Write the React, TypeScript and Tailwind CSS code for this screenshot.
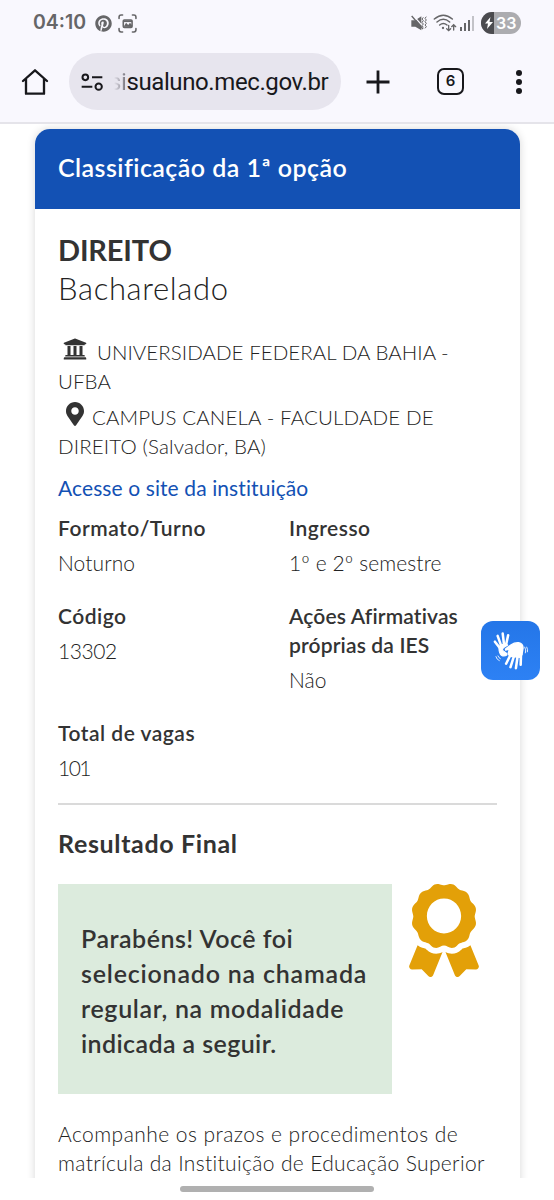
import type { ReactNode } from 'react'
import { FaAward, FaMapMarkerAlt, FaPinterest, FaUniversity } from 'react-icons/fa'

interface FieldProps {
  label: ReactNode
  value: string
  labelClass?: string
  valueClass?: string
}

function Field({ label, value, labelClass = 'tracking-[0.5px]', valueClass = 'tracking-[0.1px]' }: FieldProps) {
  return (
    <div className="leading-[29px] whitespace-nowrap">
      <p className={`text-[21px] font-semibold text-[#333] ${labelClass}`}>{label}</p>
      <p className={`mt-1.5 text-[21px] font-light text-[#222] ${valueClass}`}>{value}</p>
    </div>
  )
}

function StatusBar() {
  return (
    <div className="flex h-[46px] items-center justify-between pl-[33px] pr-[33px] text-[#666668]">
      <div className="flex items-center">
        <span className="w-[62px] font-['Inter',sans-serif] text-[19.5px] font-semibold whitespace-nowrap">04:10</span>
        <FaPinterest className="h-[17px] w-[17px]" />
        <svg className="ml-[6px] h-[19px] w-[19px]" viewBox="0 0 54 54" fill="none" stroke="currentColor" strokeWidth="4.5" strokeLinecap="round">
          <path d="M3 13V9q0-6 6-6h4M41 3h4q6 0 6 6v4M51 41v4q0 6-6 6h-4M13 51H9q-6 0-6-6v-4" />
          <rect x="15" y="17" width="25" height="21" rx="3" />
          <path d="M16 36l7-11 6 6 5-6 6 7v5z" fill="currentColor" stroke="none" />
          <path d="M15 18h25v5H15z" fill="currentColor" stroke="none" />
        </svg>
      </div>
      <div className="flex items-center">
        <svg className="h-[17px] w-[17px]" viewBox="0 0 51 51" fill="currentColor">
          <path d="M1 16h12L31 4v42L13 35H1z" />
          <path d="M6 1l38 42" stroke="#f9f8fe" strokeWidth="4" />
          <path d="M2 3l34 39" stroke="currentColor" strokeWidth="4" />
          <path d="M37 7l-4 5 4 5-4 5 4 5-4 5 4 5M46 5l-4 5 4 5-4 5 4 5-4 5 4 5-4 5" fill="none" stroke="currentColor" strokeWidth="3" />
        </svg>
        <svg className="ml-[5px] h-[18px] w-[24px]" viewBox="0 0 72 54" fill="none" stroke="currentColor" strokeWidth="4.5" strokeLinecap="round">
          <path d="M4 15Q31-8 58 15M12 24Q31 8 50 24M20 33Q31 24 42 33" />
          <circle cx="30" cy="42" r="3.500" fill="currentColor" stroke="none" />
          <path d="M47 34v15M41 44l6 6 6-6M62 48V33M56 38l6-6 6 6" strokeWidth="4" />
        </svg>
        <div className="ml-[3px] flex h-[15px] items-end gap-[2.3px]">
          <i className="h-[4px] w-[1.7px] bg-current" />
          <i className="h-[8px] w-[1.7px] bg-current" />
          <i className="h-[11px] w-[1.7px] bg-current" />
          <i className="h-[15px] w-[1.7px] bg-[#c3c3c8]" />
        </div>
        <div className="ml-[7px] flex h-[22px] w-[40px] items-center overflow-hidden rounded-full bg-[#acacb0] text-white">
          <span className="flex h-full w-[13px] items-center justify-end bg-[#4b4b4f]">
            <svg className="h-[12px] w-[10px]" viewBox="0 0 20 24" fill="currentColor">
              <path d="M13 0L2 13h6L6 24l12-14h-7z" />
            </svg>
          </span>
          <span className="pl-[2px] font-['Inter',sans-serif] text-[16px] font-semibold">33</span>
        </div>
      </div>
    </div>
  )
}

function BrowserBar() {
  return (
    <div className="flex h-[78px] border-b-2 border-[#e5e4ea] pt-[7px] text-[#18181c]">
      <svg className="mt-[15px] ml-[21px] h-[28px] w-[28px]" viewBox="0 0 84 84" fill="none" stroke="currentColor" strokeWidth="7" strokeLinejoin="round" strokeLinecap="round">
        <path d="M6 39L42 7l36 32M15 33v44h54V33" />
      </svg>
      <div className="ml-5 flex h-[57px] w-[272px] items-center rounded-full bg-[#e7e5ee] pl-[12px]">
        <svg className="h-[20px] w-[23px]" viewBox="0 0 69 60" fill="none" stroke="currentColor" strokeWidth="6">
          <circle cx="13" cy="16" r="8.500" />
          <path d="M33 16h31M2 44h32" />
          <circle cx="53" cy="44" r="9.500" />
        </svg>
        <span className="ml-[5px] font-['Roboto',sans-serif] text-[24px] tracking-[-0.4px] whitespace-nowrap">
          <span className="bg-gradient-to-r from-[#e7e5ee] from-30% to-[#77757e] bg-clip-text text-transparent">si</span>sualuno.mec.gov.br
        </span>
      </div>
      <svg className="mt-[17px] ml-[25px] h-[24px] w-[24px]" viewBox="0 0 24 24" stroke="currentColor" strokeWidth="2.800">
        <path d="M12 .5v23M.5 12h23" />
      </svg>
      <div className="mt-[15px] ml-[47px] flex h-[27px] w-[27px] items-center justify-center rounded-[7px] border-[2.500px] border-current font-['Inter',sans-serif] text-[15px] font-semibold">
        6
      </div>
      <div className="mt-[17px] ml-[52px] flex flex-col gap-[3px]">
        <i className="h-[6px] w-[6px] rounded-full bg-current" />
        <i className="h-[6px] w-[6px] rounded-full bg-current" />
        <i className="h-[6px] w-[6px] rounded-full bg-current" />
      </div>
    </div>
  )
}

function SignLanguageButton() {
  return (
    <button className="absolute top-[621px] left-[481px] h-[59px] w-[59px] rounded-[12px] bg-gradient-to-b from-[#2476e8] to-[#2d81f4]">
      <svg className="h-full w-full" viewBox="34 34 174 174" fill="none" stroke="#fff" strokeWidth="7.500" strokeLinecap="round" strokeLinejoin="round">
        <path d="M90 114L75 95M94 108L83 78M102 104L98 71M108 104L114 76" />
        <path d="M87 110q8-10 21-8l5 3-13 8-3 7 12 9 2 5q-9 6-17 1-8-7-7-25z" fill="#fff" strokeWidth="3" />
        <path d="M106 117l17-13q10-7 22-6 13 2 13 16l-3 19-6 8-30-3-5-8 4-13-11 3z" fill="#fff" strokeWidth="4" />
        <path d="M121 134l-13 26M131 138l-10 32M142 138l-5 35M152 132l-1 31" />
        <path d="M78 139q2 9 10 12M84 137q2 6 7 8M163 111q5 8 2 17M169 111q4 8 2 14" strokeWidth="2.500" />
      </svg>
    </button>
  )
}

export default function App() {
  return (
    <div className="relative flex h-[1200px] w-[554px] flex-col overflow-hidden bg-white font-['Lato',sans-serif]">
      <header className="shrink-0 bg-[#f9f8fe]">
        <StatusBar />
        <BrowserBar />
      </header>

      <main className="h-[1054px] shrink-0 overflow-hidden px-[35px] pt-[5px]">
        <section className="h-[1080px] w-[485px] rounded-t-[15px] shadow-[0_0_9px_rgba(0,0,0,0.16)]">
          <div className="flex h-[80px] items-center rounded-t-[15px] bg-[#1351b4] px-[23px] pb-[2px]">
            <h1 className="text-[25px] font-semibold tracking-[0.45px] whitespace-nowrap text-white">Classificação da 1ª opção</h1>
          </div>

          <div className="px-[23px] pt-[21px] text-[#333]">
            <h2 className="text-[29px] leading-[39px] font-bold tracking-[-0.15px]">DIREITO</h2>
            <p className="text-[31px] leading-[39px] font-light tracking-[0.65px] text-[#222]">Bacharelado</p>

            <div className="mt-[29px] text-[20.5px] leading-[29px] font-light tracking-[0.05px] whitespace-nowrap text-[#222]">
              <p>
                <FaUniversity className="mr-[10px] ml-[5px] inline h-[24px] w-[24px] align-[-1px] text-[#333]" />
                UNIVERSIDADE FEDERAL DA BAHIA -
              </p>
              <p>UFBA</p>
              <p className="mt-[6px]">
                <FaMapMarkerAlt className="mr-[8px] ml-[8px] inline h-[24px] w-[18px] align-[-1px] text-[#333]" />
                <span className="tracking-[0.15px]">CAMPUS CANELA - FACULDADE DE</span>
              </p>
              <p className="tracking-[0.15px]">DIREITO (Salvador, BA)</p>
            </div>
            <a href="#" className="mt-3 block text-[21px] leading-[29px] tracking-[0.1px] text-[#1351b4]">Acesse o site da instituição</a>

            <div className="mt-[11px] grid grid-cols-[231px_1fr] gap-y-6">
              <Field label="Formato/Turno" value="Noturno" />
              <Field label="Ingresso" value="1º e 2º semestre" />
              <Field label="Código" value="13302" valueClass="tracking-[-0.4px]" />
              <Field label={<>Ações Afirmativas<br />próprias da IES</>} value="Não" labelClass="tracking-[0.15px]" />
              <Field label="Total de vagas" value="101" valueClass="tracking-[-1.5px]" />
            </div>

            <hr className="mt-[21px] border-t-2 border-[#dadada]" />

            <h3 className="mt-[21px] text-[25px] leading-[34px] font-bold tracking-[0.65px]">Resultado Final</h3>
            <div className="mt-[24px] flex">
              <div className="h-[210px] w-[334px] bg-[#dcebdd] px-[23px] py-[37px] text-[25px] leading-[35px] font-semibold whitespace-nowrap">
                <p className="tracking-[0.5px]">Parabéns! Você foi</p>
                <p className="tracking-[0.8px]">selecionado na chamada</p>
                <p className="tracking-[0.65px]">regular, na modalidade</p>
                <p className="tracking-[0.4px]">indicada a seguir.</p>
              </div>
              <FaAward className="ml-[17px] h-[93px] w-[70px] text-[#e3a008]" />
            </div>

            <div className="mt-[25px] text-[21px] leading-[29px] font-light whitespace-nowrap text-[#222]">
              <p className="tracking-[0.45px]">Acompanhe os prazos e procedimentos de</p>
              <p className="tracking-[0.35px]">matrícula da Instituição de Educação Superior</p>
            </div>
          </div>
        </section>
      </main>

      <footer className="flex h-[22px] justify-center bg-white pt-[8px]">
        <div className="h-[6px] w-[194px] rounded-full bg-[#b0b0b0]" />
      </footer>

      <SignLanguageButton />
    </div>
  )
}
